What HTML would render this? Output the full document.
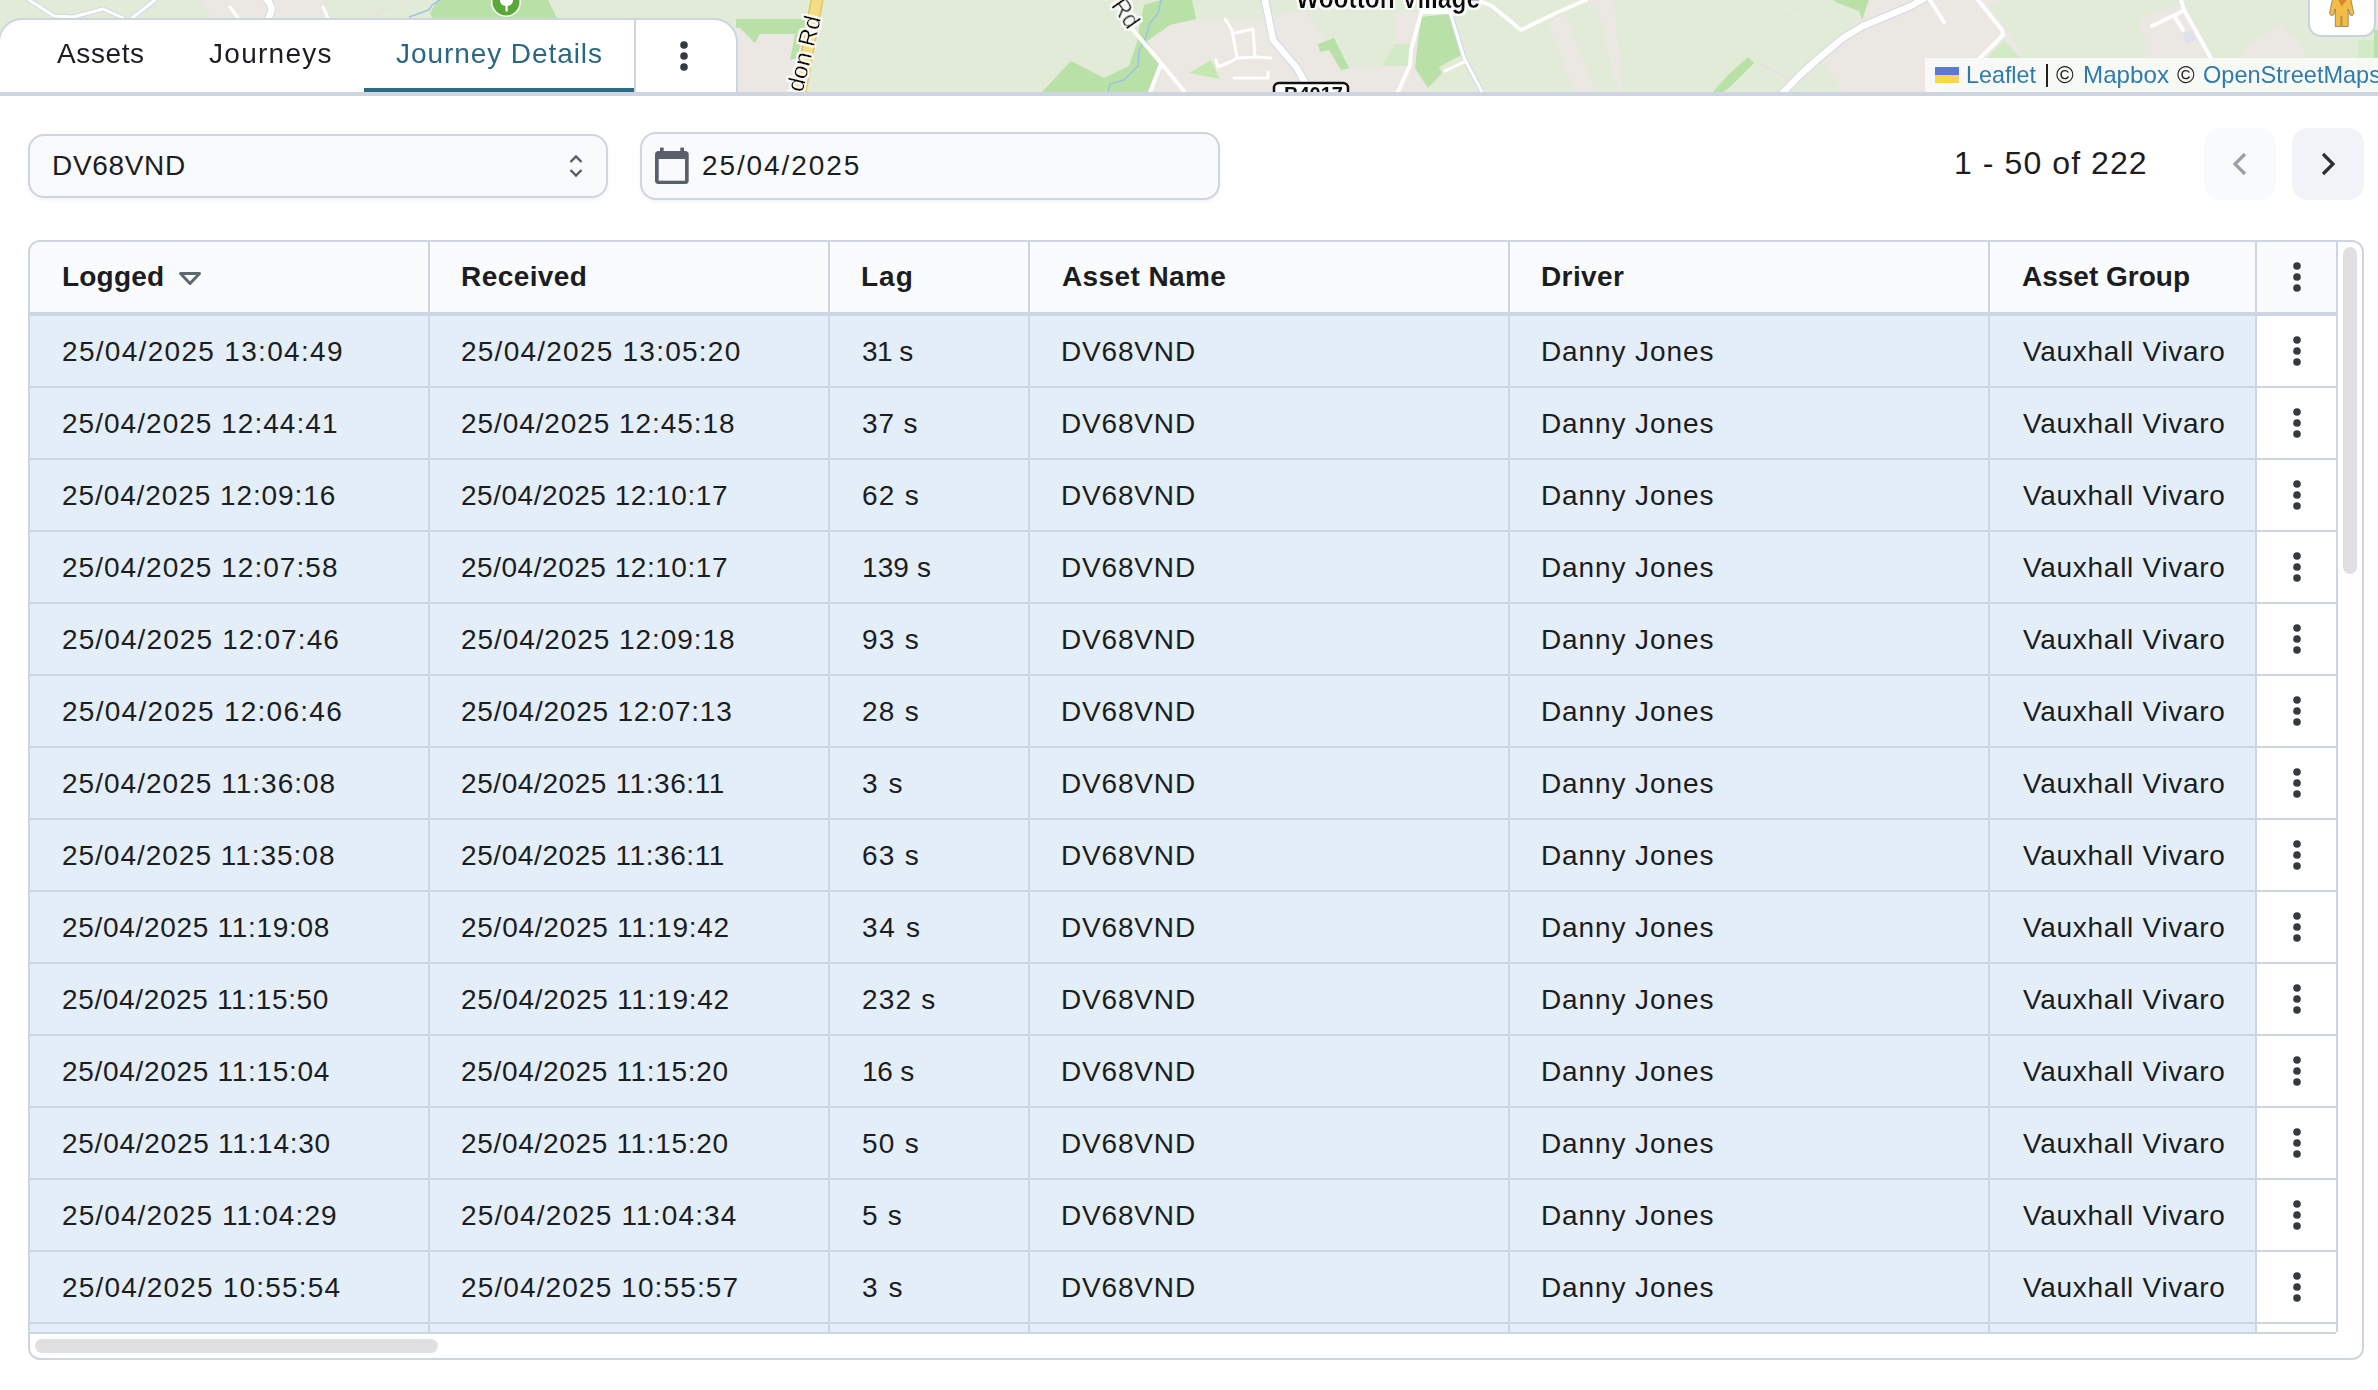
<!DOCTYPE html><html><head><meta charset="utf-8"><style>
*{margin:0;padding:0;box-sizing:border-box}
html,body{width:2378px;height:1390px;overflow:hidden;background:#fff}
body{position:relative;font-family:"Liberation Sans",sans-serif;color:#1b1d21}
.ab{position:absolute}
.t{position:absolute;white-space:pre;line-height:40px;font-size:28px}
.b{font-weight:700}
</style></head><body>
<div class="ab" style="left:0;top:0;width:2378px;height:92px;background:#e1ebd8;overflow:hidden">
<svg width="2378" height="92" style="position:absolute;left:0;top:0"><defs><filter id="halo" x="-10%" y="-30%" width="120%" height="160%"><feMorphology operator="dilate" radius="2" in="SourceAlpha" result="d"/><feFlood flood-color="#fff" flood-opacity="0.85"/><feComposite in2="d" operator="in" result="h"/><feMerge><feMergeNode in="h"/><feMergeNode in="SourceGraphic"/></feMerge></filter></defs>
<!-- beige areas -->
<g fill="#ebe8e3">
<polygon points="200,0 322,0 330,18 213,18"/>
<polygon points="736,27 800,27 800,92 736,92"/>
<polygon points="1148,40 1170,24 1196,19 1260,19 1274,16 1305,10 1347,70 1349,68 1409,66 1409,44 1395,44 1395,12 1420,12 1430,92 1140,92"/>
<polygon points="1548,22 1565,13 1594,88 1594,92 1574,92"/>
<polygon points="1589,0 1614,0 1623,92 1617,92 1599,12"/>
<polygon points="1820,60 1845,37 1869,0 2002,0 1990,8 2027,58 2024,92 1844,92"/>
<polygon points="2140,20 2180,3 2187,10 2210,58 2145,58 2145,35 2140,33"/>
<polygon points="2242,50 2280,23 2285,25 2290,37 2299,37 2306,58 2242,58"/>
</g>
<!-- light green patches -->
<g fill="#d3eac7">
<polygon points="1382,66 1395,44 1410,44 1410,66"/>
<polygon points="1987,58 2004,40 2021,58"/>
<polygon points="2358,40 2378,40 2378,58 2358,58"/>
</g>
<!-- dark green -->
<g fill="#b9e0a7">
<polygon points="438,0 548,0 557,18 432,18 430,13"/>
<polygon points="736,19 805,19 805,27 797,58 790,60 795,34 760,34 755,43 740,28 736,28"/>
<polygon points="1144,5 1161,0 1192,0 1196,19 1170,25 1147,41 1159,63 1150,92 1042,92 1071,61 1104,78 1129,66 1137,42 1139,30"/>
<polygon points="1189,73 1211,60 1220,79" fill="#c3e8b1"/>
<polygon points="1318,44 1334,38 1349,68 1341,70 1329,50 1320,52"/>
<polygon points="1421,17 1449,14 1461,55 1439,67 1442,73 1428,88 1415,68 1418,40"/>
<polygon points="1748,57 1754,63 1731,86 1723,92 1713,92 1727,76"/>
<polygon points="1833,0 1869,0 1862,20 1859,11 1838,3"/>
<polygon points="2374,30 2378,30 2378,58 2374,58"/>
</g>
<!-- faint lines -->
<g stroke="#e6e3de" stroke-width="2" fill="none">
<path d="M389,8 L370,18"/><path d="M1047,45 L1071,60"/><path d="M1760,64 L1788,78"/><path d="M1784,18 L1805,3"/>
</g>
<!-- river -->
<path d="M440,0 L432,5 L429,10 L409,17 M1161,0 L1158,13 L1150,23 L1146,37 L1139,51 L1138,66 L1124,80 L1110,84 L1108,92" stroke="#9cc2e4" stroke-width="1.5" fill="none"/>
<!-- roads casing -->
<g fill="none" stroke-linecap="round" stroke-linejoin="round">
<g stroke="#d2d8e2" stroke-width="5">
<path d="M29,0 L54,16 L73,17 L103,9 L123,18 M155,0 L132,18"/>
<path d="M1450,12 L1464,58 L1482,92"/>
</g>
<g stroke="#d2d8e2" stroke-width="8.5">
<path d="M265,-2 C272,4 274,10 267,20"/>
<path d="M1265,0 L1273,40 L1297,68 L1310,92"/>
<path d="M1770,106 L1800,75 L1819,58 L1843,38 L1863,26 L1911,6 L1925,-2"/>
</g>
<g stroke="#fff" stroke-width="3">
<path d="M29,0 L54,16 L73,17 L103,9 L123,18 M155,0 L132,18"/>
<path d="M1450,12 L1464,58 L1482,92 M1445,71 L1464,62"/>
</g>
<g stroke="#fff" stroke-width="4">
<path d="M1129,25 L1185,92 M1161,64 L1150,92"/>
<path d="M1422,10 L1411,50 L1410,65 L1398,92 M1422,12 L1450,12"/>
<path d="M1482,2 L1492,6 L1521,30 L1556,13 L1586,0"/>
<path d="M1930,0 L1944,22 M1978,0 L2002,30 L2003,35 L1974,64 L1931,92"/>
<path d="M2181,0 L2184,10 L2211,58 M2152,26 L2183,11 M2175,17 L2183,30"/>
</g>
<g stroke="#fff" stroke-width="3">
<path d="M230,7 L238,18 M323,7 L328,18"/>
<path d="M1225,19 L1232,30 L1237,58 L1257,57 L1271,58 M1235,33 L1253,29 L1255,57 M1216,60 L1218,67 L1230,62 L1237,58 M1234,78 L1268,78 L1268,72"/>
</g>
<g stroke="#fff" stroke-width="6.5">
<path d="M265,-2 C272,4 274,10 267,20"/>
<path d="M1265,0 L1273,40 L1297,68 L1310,92"/>
<path d="M1770,106 L1800,75 L1819,58 L1843,38 L1863,26 L1911,6 L1925,-2"/>
</g>
<!-- yellow road -->
<path d="M817,0 L800,92" stroke="#e2c761" stroke-width="13"/>
<path d="M817,0 L800,92" stroke="#f3dd85" stroke-width="10"/>
</g>
<!-- pool -->
<polygon points="2183,33 2193,30 2197,40 2186,43" fill="#dde2ea"/>
<!-- labels -->
<g font-family="Liberation Sans" fill="#111" filter="url(#halo)">
<text x="0" y="0" font-size="24" transform="translate(796,119) rotate(-76)">ngdon Rd</text>
<text x="0" y="0" font-size="24" transform="translate(1099,-11) rotate(55)">n Rd</text>
<text x="1296" y="8" font-size="30" font-weight="700" textLength="184" lengthAdjust="spacingAndGlyphs">Wootton Village</text>
</g>
<!-- road shield -->
<rect x="1274" y="83" width="74" height="20" rx="5" fill="#fff" stroke="#111" stroke-width="2.5"/>
<text x="1284" y="101" font-family="Liberation Sans" font-size="20" font-weight="700" fill="#111">B4017</text>
<!-- POI -->
<circle cx="506" cy="2" r="15" fill="#fff"/>
<circle cx="506" cy="2" r="13.5" fill="#5aa83a"/>
<ellipse cx="506.5" cy="0.5" rx="6.5" ry="5.5" fill="#fff"/><rect x="505.5" y="4" width="2.2" height="7.5" fill="#fff"/>
<!-- attribution -->
<rect x="1925" y="58" width="453" height="34" fill="#fafbf8" fill-opacity="0.9"/>
<rect x="1935" y="67" width="24" height="8" fill="#5b78d8"/>
<rect x="1935" y="75" width="24" height="8" fill="#f6d64a"/>
<g font-family="Liberation Sans" font-size="24">
<text x="1966" y="83" fill="#2f7aae" textLength="70" lengthAdjust="spacingAndGlyphs">Leaflet</text>
<rect x="2046" y="64" width="2" height="23" fill="#222"/>
<text x="2056" y="83" fill="#222">©</text>
<text x="2083" y="83" fill="#2f7aae" textLength="86" lengthAdjust="spacingAndGlyphs">Mapbox</text>
<text x="2177" y="83" fill="#222">©</text>
<text x="2203" y="83" fill="#2f7aae" textLength="178" lengthAdjust="spacingAndGlyphs">OpenStreetMaps</text>
</g>
<!-- pegman button -->
<rect x="2309" y="-14" width="66" height="50" rx="12" fill="#fff" stroke="#c9d2de" stroke-width="2"/>
<path d="M2332.5,-1 L2329.5,13.5 L2331,15.5 L2333.5,15 L2335.3,9 L2335.3,26.5 L2341,26.5 L2341,16 L2341.8,16 L2341.8,26.5 L2348.2,26.5 L2348.2,9 L2350,15 L2352.5,15.5 L2353.8,13.5 L2350.8,-1 z" fill="#f3bd45" stroke="#7a6a50" stroke-width="0.7"/>
<path d="M2337.8,-1 L2347.4,-1 L2341.6,6.5 z" fill="#d98531"/>
</svg>
</div>
<div class="ab" style="left:-2px;top:18px;width:740px;height:78px;background:#fff;border:2px solid #cdd5e0;border-bottom:none;border-radius:24px 24px 0 0"></div>
<div class="ab" style="left:0;top:92px;width:2378px;height:4px;background:#cdd5e0"></div>
<div class="ab" style="left:634px;top:20px;width:2px;height:72px;background:#cdd5e0"></div>
<div class="ab" style="left:364px;top:88px;width:270px;height:4px;background:#2c6a82"></div>
<div class="t" style="left:57px;top:34px;letter-spacing:0.6px">Assets</div>
<div class="t" style="left:209px;top:34px;letter-spacing:1.28px">Journeys</div>
<div class="t" style="left:396px;top:34px;letter-spacing:0.93px;color:#2a6781">Journey Details</div>
<svg class="ab" style="left:678px;top:39px" width="12" height="34"><circle cx="6" cy="6" r="3.8" fill="#343a40"/><circle cx="6" cy="17" r="3.8" fill="#343a40"/><circle cx="6" cy="28" r="3.8" fill="#343a40"/></svg>
<div class="ab" style="left:28px;top:134px;width:580px;height:64px;background:#f8fafc;border:2px solid #cdd5e0;border-radius:16px;box-shadow:0 2px 4px rgba(0,0,0,0.05)"></div>
<div class="t" style="left:52px;top:146px;letter-spacing:0.67px">DV68VND</div>
<svg class="ab" style="left:560px;top:148px" width="32" height="36"><path d="M10.5 14 L16 8.5 L21.5 14 M10.5 22 L16 27.5 L21.5 22" fill="none" stroke="#555d68" stroke-width="2.4"/></svg>
<div class="ab" style="left:640px;top:132px;width:580px;height:68px;background:#f8fafc;border:2px solid #cdd5e0;border-radius:16px;box-shadow:0 2px 4px rgba(0,0,0,0.05)"></div>
<svg class="ab" style="left:650px;top:144px" width="44" height="44"><rect x="5" y="7" width="33.7" height="33" rx="3.5" fill="#59606b"/><rect x="8.7" y="15" width="26.3" height="21.7" fill="#f8fafc"/><rect x="10" y="3.6" width="3.7" height="5" fill="#59606b"/><rect x="30.3" y="3.6" width="3.7" height="5" fill="#59606b"/></svg>
<div class="t" style="left:702px;top:146px;letter-spacing:1.9px">25/04/2025</div>
<div class="t" style="left:1954px;top:143px;font-size:32px;letter-spacing:1.08px">1 - 50 of 222</div>
<div class="ab" style="left:2204px;top:128px;width:72px;height:72px;border-radius:16px;background:#f9fafc"></div>
<div class="ab" style="left:2292px;top:128px;width:72px;height:72px;border-radius:16px;background:#f0f3f8"></div>
<svg class="ab" style="left:2204px;top:128px" width="72" height="72"><path d="M41 26 L31 36 L41 46" fill="none" stroke="#9ca1a8" stroke-width="3.2"/></svg>
<svg class="ab" style="left:2292px;top:128px" width="72" height="72"><path d="M31 26 L41 36 L31 46" fill="none" stroke="#2b3035" stroke-width="3.2"/></svg>
<div class="ab" style="left:28px;top:240px;width:2336px;height:1120px;border:2px solid #cdd5e0;border-radius:12px;background:#fff;overflow:hidden">
<div class="ab" style="left:0;top:0;width:2306px;height:70px;background:#fafbfd"></div>
<div class="ab" style="left:0;top:74px;width:2225px;height:1016px;background:#e4eef8"></div>
<div class="ab" style="left:0;top:70px;width:2308px;height:4px;background:#cdd5e0"></div>
<div class="ab" style="left:0;top:144px;width:2306px;height:2px;background:#cdd5e0"></div>
<div class="ab" style="left:0;top:216px;width:2306px;height:2px;background:#cdd5e0"></div>
<div class="ab" style="left:0;top:288px;width:2306px;height:2px;background:#cdd5e0"></div>
<div class="ab" style="left:0;top:360px;width:2306px;height:2px;background:#cdd5e0"></div>
<div class="ab" style="left:0;top:432px;width:2306px;height:2px;background:#cdd5e0"></div>
<div class="ab" style="left:0;top:504px;width:2306px;height:2px;background:#cdd5e0"></div>
<div class="ab" style="left:0;top:576px;width:2306px;height:2px;background:#cdd5e0"></div>
<div class="ab" style="left:0;top:648px;width:2306px;height:2px;background:#cdd5e0"></div>
<div class="ab" style="left:0;top:720px;width:2306px;height:2px;background:#cdd5e0"></div>
<div class="ab" style="left:0;top:792px;width:2306px;height:2px;background:#cdd5e0"></div>
<div class="ab" style="left:0;top:864px;width:2306px;height:2px;background:#cdd5e0"></div>
<div class="ab" style="left:0;top:936px;width:2306px;height:2px;background:#cdd5e0"></div>
<div class="ab" style="left:0;top:1008px;width:2306px;height:2px;background:#cdd5e0"></div>
<div class="ab" style="left:0;top:1080px;width:2306px;height:2px;background:#cdd5e0"></div>
<div class="ab" style="left:0;top:1090px;width:2306px;height:2px;background:#cdd5e0"></div>
<div class="ab" style="left:398px;top:0;width:2px;height:1090px;background:#cdd5e0"></div>
<div class="ab" style="left:798px;top:0;width:2px;height:1090px;background:#cdd5e0"></div>
<div class="ab" style="left:998px;top:0;width:2px;height:1090px;background:#cdd5e0"></div>
<div class="ab" style="left:1478px;top:0;width:2px;height:1090px;background:#cdd5e0"></div>
<div class="ab" style="left:1958px;top:0;width:2px;height:1090px;background:#cdd5e0"></div>
<div class="ab" style="left:2225px;top:0;width:2px;height:1090px;background:#cdd5e0"></div>
<div class="ab" style="left:2306px;top:0;width:2px;height:1090px;background:#cdd5e0"></div>
<div class="ab" style="left:2313px;top:5px;width:14px;height:327px;border-radius:7px;background:#e0e0e1"></div>
<div class="ab" style="left:5px;top:1097px;width:403px;height:14px;border-radius:7px;background:#e0e0e1"></div>
<div class="t b" style="left:32px;top:15px;letter-spacing:0.2px">Logged</div>
<div class="t b" style="left:431px;top:15px;letter-spacing:0.43px">Received</div>
<div class="t b" style="left:831px;top:15px;letter-spacing:1.0px">Lag</div>
<div class="t b" style="left:1032px;top:15px;letter-spacing:0.39px">Asset Name</div>
<div class="t b" style="left:1511px;top:15px;letter-spacing:0.4px">Driver</div>
<div class="t b" style="left:1992px;top:15px;letter-spacing:0.0px">Asset Group</div>
<svg class="ab" style="left:146px;top:26px" width="28" height="20"><path d="M4.5 5.5 L23.5 5.5 L14 15.5 Z" fill="none" stroke="#5f6770" stroke-width="3" stroke-linejoin="round"/></svg>
<svg class="ab" style="left:2261px;top:18px" width="12" height="34"><circle cx="6" cy="6" r="3.8" fill="#343a40"/><circle cx="6" cy="17" r="3.8" fill="#343a40"/><circle cx="6" cy="28" r="3.8" fill="#343a40"/></svg>
<div class="t" style="left:32px;top:90px;letter-spacing:1.31px">25/04/2025 13:04:49</div>
<div class="t" style="left:431px;top:90px;letter-spacing:1.24px">25/04/2025 13:05:20</div>
<div class="t" style="left:832px;top:90px;letter-spacing:-0.57px">31 s</div>
<div class="t" style="left:1031px;top:90px;letter-spacing:0.83px">DV68VND</div>
<div class="t" style="left:1511px;top:90px;letter-spacing:0.9px">Danny Jones</div>
<div class="t" style="left:1993px;top:90px;letter-spacing:0.71px">Vauxhall Vivaro</div>
<svg class="ab" style="left:2261px;top:92px" width="12" height="34"><circle cx="6" cy="6" r="3.8" fill="#343a40"/><circle cx="6" cy="17" r="3.8" fill="#343a40"/><circle cx="6" cy="28" r="3.8" fill="#343a40"/></svg>
<div class="t" style="left:32px;top:162px;letter-spacing:1.03px">25/04/2025 12:44:41</div>
<div class="t" style="left:431px;top:162px;letter-spacing:0.92px">25/04/2025 12:45:18</div>
<div class="t" style="left:832px;top:162px;letter-spacing:0.90px">37 s</div>
<div class="t" style="left:1031px;top:162px;letter-spacing:0.83px">DV68VND</div>
<div class="t" style="left:1511px;top:162px;letter-spacing:0.9px">Danny Jones</div>
<div class="t" style="left:1993px;top:162px;letter-spacing:0.71px">Vauxhall Vivaro</div>
<svg class="ab" style="left:2261px;top:164px" width="12" height="34"><circle cx="6" cy="6" r="3.8" fill="#343a40"/><circle cx="6" cy="17" r="3.8" fill="#343a40"/><circle cx="6" cy="28" r="3.8" fill="#343a40"/></svg>
<div class="t" style="left:32px;top:234px;letter-spacing:0.91px">25/04/2025 12:09:16</div>
<div class="t" style="left:431px;top:234px;letter-spacing:0.53px">25/04/2025 12:10:17</div>
<div class="t" style="left:832px;top:234px;letter-spacing:1.27px">62 s</div>
<div class="t" style="left:1031px;top:234px;letter-spacing:0.83px">DV68VND</div>
<div class="t" style="left:1511px;top:234px;letter-spacing:0.9px">Danny Jones</div>
<div class="t" style="left:1993px;top:234px;letter-spacing:0.71px">Vauxhall Vivaro</div>
<svg class="ab" style="left:2261px;top:236px" width="12" height="34"><circle cx="6" cy="6" r="3.8" fill="#343a40"/><circle cx="6" cy="17" r="3.8" fill="#343a40"/><circle cx="6" cy="28" r="3.8" fill="#343a40"/></svg>
<div class="t" style="left:32px;top:306px;letter-spacing:1.03px">25/04/2025 12:07:58</div>
<div class="t" style="left:431px;top:306px;letter-spacing:0.53px">25/04/2025 12:10:17</div>
<div class="t" style="left:832px;top:306px;letter-spacing:0.10px">139 s</div>
<div class="t" style="left:1031px;top:306px;letter-spacing:0.83px">DV68VND</div>
<div class="t" style="left:1511px;top:306px;letter-spacing:0.9px">Danny Jones</div>
<div class="t" style="left:1993px;top:306px;letter-spacing:0.71px">Vauxhall Vivaro</div>
<svg class="ab" style="left:2261px;top:308px" width="12" height="34"><circle cx="6" cy="6" r="3.8" fill="#343a40"/><circle cx="6" cy="17" r="3.8" fill="#343a40"/><circle cx="6" cy="28" r="3.8" fill="#343a40"/></svg>
<div class="t" style="left:32px;top:378px;letter-spacing:1.11px">25/04/2025 12:07:46</div>
<div class="t" style="left:431px;top:378px;letter-spacing:0.92px">25/04/2025 12:09:18</div>
<div class="t" style="left:832px;top:378px;letter-spacing:1.27px">93 s</div>
<div class="t" style="left:1031px;top:378px;letter-spacing:0.83px">DV68VND</div>
<div class="t" style="left:1511px;top:378px;letter-spacing:0.9px">Danny Jones</div>
<div class="t" style="left:1993px;top:378px;letter-spacing:0.71px">Vauxhall Vivaro</div>
<svg class="ab" style="left:2261px;top:380px" width="12" height="34"><circle cx="6" cy="6" r="3.8" fill="#343a40"/><circle cx="6" cy="17" r="3.8" fill="#343a40"/><circle cx="6" cy="28" r="3.8" fill="#343a40"/></svg>
<div class="t" style="left:32px;top:450px;letter-spacing:1.27px">25/04/2025 12:06:46</div>
<div class="t" style="left:431px;top:450px;letter-spacing:0.77px">25/04/2025 12:07:13</div>
<div class="t" style="left:832px;top:450px;letter-spacing:1.27px">28 s</div>
<div class="t" style="left:1031px;top:450px;letter-spacing:0.83px">DV68VND</div>
<div class="t" style="left:1511px;top:450px;letter-spacing:0.9px">Danny Jones</div>
<div class="t" style="left:1993px;top:450px;letter-spacing:0.71px">Vauxhall Vivaro</div>
<svg class="ab" style="left:2261px;top:452px" width="12" height="34"><circle cx="6" cy="6" r="3.8" fill="#343a40"/><circle cx="6" cy="17" r="3.8" fill="#343a40"/><circle cx="6" cy="28" r="3.8" fill="#343a40"/></svg>
<div class="t" style="left:32px;top:522px;letter-spacing:1.02px">25/04/2025 11:36:08</div>
<div class="t" style="left:431px;top:522px;letter-spacing:0.59px">25/04/2025 11:36:11</div>
<div class="t" style="left:832px;top:522px;letter-spacing:1.55px">3 s</div>
<div class="t" style="left:1031px;top:522px;letter-spacing:0.83px">DV68VND</div>
<div class="t" style="left:1511px;top:522px;letter-spacing:0.9px">Danny Jones</div>
<div class="t" style="left:1993px;top:522px;letter-spacing:0.71px">Vauxhall Vivaro</div>
<svg class="ab" style="left:2261px;top:524px" width="12" height="34"><circle cx="6" cy="6" r="3.8" fill="#343a40"/><circle cx="6" cy="17" r="3.8" fill="#343a40"/><circle cx="6" cy="28" r="3.8" fill="#343a40"/></svg>
<div class="t" style="left:32px;top:594px;letter-spacing:0.98px">25/04/2025 11:35:08</div>
<div class="t" style="left:431px;top:594px;letter-spacing:0.59px">25/04/2025 11:36:11</div>
<div class="t" style="left:832px;top:594px;letter-spacing:1.27px">63 s</div>
<div class="t" style="left:1031px;top:594px;letter-spacing:0.83px">DV68VND</div>
<div class="t" style="left:1511px;top:594px;letter-spacing:0.9px">Danny Jones</div>
<div class="t" style="left:1993px;top:594px;letter-spacing:0.71px">Vauxhall Vivaro</div>
<svg class="ab" style="left:2261px;top:596px" width="12" height="34"><circle cx="6" cy="6" r="3.8" fill="#343a40"/><circle cx="6" cy="17" r="3.8" fill="#343a40"/><circle cx="6" cy="28" r="3.8" fill="#343a40"/></svg>
<div class="t" style="left:32px;top:666px;letter-spacing:0.70px">25/04/2025 11:19:08</div>
<div class="t" style="left:431px;top:666px;letter-spacing:0.74px">25/04/2025 11:19:42</div>
<div class="t" style="left:832px;top:666px;letter-spacing:1.73px">34 s</div>
<div class="t" style="left:1031px;top:666px;letter-spacing:0.83px">DV68VND</div>
<div class="t" style="left:1511px;top:666px;letter-spacing:0.9px">Danny Jones</div>
<div class="t" style="left:1993px;top:666px;letter-spacing:0.71px">Vauxhall Vivaro</div>
<svg class="ab" style="left:2261px;top:668px" width="12" height="34"><circle cx="6" cy="6" r="3.8" fill="#343a40"/><circle cx="6" cy="17" r="3.8" fill="#343a40"/><circle cx="6" cy="28" r="3.8" fill="#343a40"/></svg>
<div class="t" style="left:32px;top:738px;letter-spacing:0.64px">25/04/2025 11:15:50</div>
<div class="t" style="left:431px;top:738px;letter-spacing:0.74px">25/04/2025 11:19:42</div>
<div class="t" style="left:832px;top:738px;letter-spacing:1.20px">232 s</div>
<div class="t" style="left:1031px;top:738px;letter-spacing:0.83px">DV68VND</div>
<div class="t" style="left:1511px;top:738px;letter-spacing:0.9px">Danny Jones</div>
<div class="t" style="left:1993px;top:738px;letter-spacing:0.71px">Vauxhall Vivaro</div>
<svg class="ab" style="left:2261px;top:740px" width="12" height="34"><circle cx="6" cy="6" r="3.8" fill="#343a40"/><circle cx="6" cy="17" r="3.8" fill="#343a40"/><circle cx="6" cy="28" r="3.8" fill="#343a40"/></svg>
<div class="t" style="left:32px;top:810px;letter-spacing:0.70px">25/04/2025 11:15:04</div>
<div class="t" style="left:431px;top:810px;letter-spacing:0.68px">25/04/2025 11:15:20</div>
<div class="t" style="left:832px;top:810px;letter-spacing:-0.23px">16 s</div>
<div class="t" style="left:1031px;top:810px;letter-spacing:0.83px">DV68VND</div>
<div class="t" style="left:1511px;top:810px;letter-spacing:0.9px">Danny Jones</div>
<div class="t" style="left:1993px;top:810px;letter-spacing:0.71px">Vauxhall Vivaro</div>
<svg class="ab" style="left:2261px;top:812px" width="12" height="34"><circle cx="6" cy="6" r="3.8" fill="#343a40"/><circle cx="6" cy="17" r="3.8" fill="#343a40"/><circle cx="6" cy="28" r="3.8" fill="#343a40"/></svg>
<div class="t" style="left:32px;top:882px;letter-spacing:0.74px">25/04/2025 11:14:30</div>
<div class="t" style="left:431px;top:882px;letter-spacing:0.68px">25/04/2025 11:15:20</div>
<div class="t" style="left:832px;top:882px;letter-spacing:1.27px">50 s</div>
<div class="t" style="left:1031px;top:882px;letter-spacing:0.83px">DV68VND</div>
<div class="t" style="left:1511px;top:882px;letter-spacing:0.9px">Danny Jones</div>
<div class="t" style="left:1993px;top:882px;letter-spacing:0.71px">Vauxhall Vivaro</div>
<svg class="ab" style="left:2261px;top:884px" width="12" height="34"><circle cx="6" cy="6" r="3.8" fill="#343a40"/><circle cx="6" cy="17" r="3.8" fill="#343a40"/><circle cx="6" cy="28" r="3.8" fill="#343a40"/></svg>
<div class="t" style="left:32px;top:954px;letter-spacing:1.10px">25/04/2025 11:04:29</div>
<div class="t" style="left:431px;top:954px;letter-spacing:1.14px">25/04/2025 11:04:34</div>
<div class="t" style="left:832px;top:954px;letter-spacing:1.20px">5 s</div>
<div class="t" style="left:1031px;top:954px;letter-spacing:0.83px">DV68VND</div>
<div class="t" style="left:1511px;top:954px;letter-spacing:0.9px">Danny Jones</div>
<div class="t" style="left:1993px;top:954px;letter-spacing:0.71px">Vauxhall Vivaro</div>
<svg class="ab" style="left:2261px;top:956px" width="12" height="34"><circle cx="6" cy="6" r="3.8" fill="#343a40"/><circle cx="6" cy="17" r="3.8" fill="#343a40"/><circle cx="6" cy="28" r="3.8" fill="#343a40"/></svg>
<div class="t" style="left:32px;top:1026px;letter-spacing:1.17px">25/04/2025 10:55:54</div>
<div class="t" style="left:431px;top:1026px;letter-spacing:1.12px">25/04/2025 10:55:57</div>
<div class="t" style="left:832px;top:1026px;letter-spacing:1.55px">3 s</div>
<div class="t" style="left:1031px;top:1026px;letter-spacing:0.83px">DV68VND</div>
<div class="t" style="left:1511px;top:1026px;letter-spacing:0.9px">Danny Jones</div>
<div class="t" style="left:1993px;top:1026px;letter-spacing:0.71px">Vauxhall Vivaro</div>
<svg class="ab" style="left:2261px;top:1028px" width="12" height="34"><circle cx="6" cy="6" r="3.8" fill="#343a40"/><circle cx="6" cy="17" r="3.8" fill="#343a40"/><circle cx="6" cy="28" r="3.8" fill="#343a40"/></svg>
</div>
</body></html>
